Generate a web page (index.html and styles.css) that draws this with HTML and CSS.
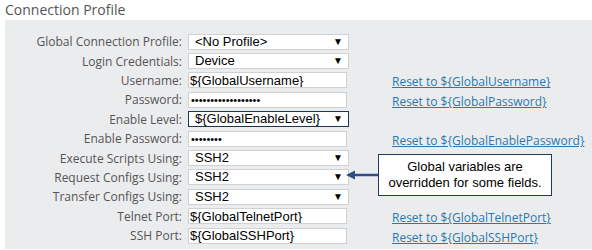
FILE: index.html
```html
<!DOCTYPE html>
<html lang="en">
<head>
    <title>Connection Profile</title>
    <meta charset="utf-8">
    <link rel="stylesheet" href="styles.css">
</head>
<body>
    <h1 class="title">Connection Profile</h1>

    <div class="panel">
        <div class="form">
            <label class="label">Global Connection Profile:</label>
            <div class="field"><div class="select">&lt;No Profile&gt;<span class="arrow">&#9660;</span></div></div>
            <div class="link"></div>

            <label class="label">Login Credentials:</label>
            <div class="field"><div class="select">Device<span class="arrow">&#9660;</span></div></div>
            <div class="link"></div>

            <label class="label">Username:</label>
            <div class="field"><input class="text" type="text" value="${GlobalUsername}"></div>
            <div class="link"><a href="#">Reset to ${GlobalUsername}</a></div>

            <label class="label">Password:</label>
            <div class="field"><input class="text" type="password" value="xxxxxxxxxxxxxxxxxx"></div>
            <div class="link"><a href="#">Reset to ${GlobalPassword}</a></div>

            <label class="label">Enable Level:</label>
            <div class="field"><div class="select focused">${GlobalEnableLevel}<span class="arrow">&#9660;</span></div></div>
            <div class="link"></div>

            <label class="label">Enable Password:</label>
            <div class="field"><input class="text" type="password" value="xxxxxxxx"></div>
            <div class="link"><a href="#">Reset to ${GlobalEnablePassword}</a></div>

            <label class="label">Execute Scripts Using:</label>
            <div class="field"><div class="select">SSH2<span class="arrow">&#9660;</span></div></div>
            <div class="link"></div>

            <label class="label">Request Configs Using:</label>
            <div class="field"><div class="select">SSH2<span class="arrow">&#9660;</span></div></div>
            <div class="link"></div>

            <label class="label">Transfer Configs Using:</label>
            <div class="field"><div class="select">SSH2<span class="arrow">&#9660;</span></div></div>
            <div class="link"></div>

            <label class="label">Telnet Port:</label>
            <div class="field"><input class="text" type="text" value="${GlobalTelnetPort}"></div>
            <div class="link"><a href="#">Reset to ${GlobalTelnetPort}</a></div>

            <label class="label">SSH Port:</label>
            <div class="field"><input class="text" type="text" value="${GlobalSSHPort}"></div>
            <div class="link"><a href="#">Reset to ${GlobalSSHPort}</a></div>
        </div>

        <!-- Callout note -->
        <div class="callout">
            <svg class="callout-arrow" width="32" height="10" viewBox="0 0 32 10">
                <line x1="7" y1="5" x2="32" y2="5" stroke="#2f4f84" stroke-width="2.5"/>
                <polygon points="0,5 9,0.5 9,9.5" fill="#2f4f84"/>
            </svg>
            <div class="callout-box">Global variables are<br>overridden for some fields.</div>
        </div>
    </div>
</body>
</html>
```

FILE: styles.css
```css
/* General styles */
body {
    margin: 0;
    background: #ffffff;
    font-family: 'Open Sans', sans-serif;
}

.title {
    margin: 0;
    padding-left: 5px;
    height: 20px;
    line-height: 20px;
    font-size: 14px;
    font-weight: normal;
    color: #555555;
}

/* Grey panel */
.panel {
    position: relative;
    margin-left: 5px;
    height: 229px;
    padding-top: 12px;
    box-sizing: border-box;
    background: #ebecee;
}

.form {
    display: grid;
    grid-template-columns: 177px 210px auto;
    grid-auto-rows: 19.4px;
    align-items: center;
}

.label {
    text-align: right;
    font-size: 12px;
    color: #555555;
    white-space: nowrap;
}

.field {
    padding-left: 6px;
}

/* Fields */
.select,
.text {
    box-sizing: border-box;
    height: 16px;
    border: 1px solid #d0d1d3;
    background: #ffffff;
    font-family: 'Liberation Sans', Arial, sans-serif;
    font-size: 13px;
    color: #000000;
}

.select {
    position: relative;
    width: 161px;
    padding-left: 6px;
    line-height: 14px;
}

.select.focused {
    border-color: #1c3553;
}

.arrow {
    position: absolute;
    right: 5px;
    top: 0;
    font-size: 10px;
    line-height: 14px;
}

.text {
    display: block;
    width: 159px;
    margin: 0;
    padding: 0 0 0 1px;
    outline: none;
}

input[type="password"] {
    font-size: 11px;
    padding-left: 2px;
}

/* Reset links */
.link a {
    font-size: 12px;
    color: #2a78ad;
    text-decoration: underline;
    white-space: nowrap;
}

/* Callout */
.callout {
    position: absolute;
    left: 341px;
    top: 134px;
    display: flex;
    align-items: center;
}

.callout-arrow {
    display: block;
}

.callout-box {
    width: 174px;
    height: 42px;
    box-sizing: border-box;
    border: 1px solid #1f3864;
    background: #ffffff;
    text-align: center;
    font-family: 'Liberation Sans', Arial, sans-serif;
    font-size: 13px;
    line-height: 16px;
    padding-top: 4px;
    color: #000000;
}
```
